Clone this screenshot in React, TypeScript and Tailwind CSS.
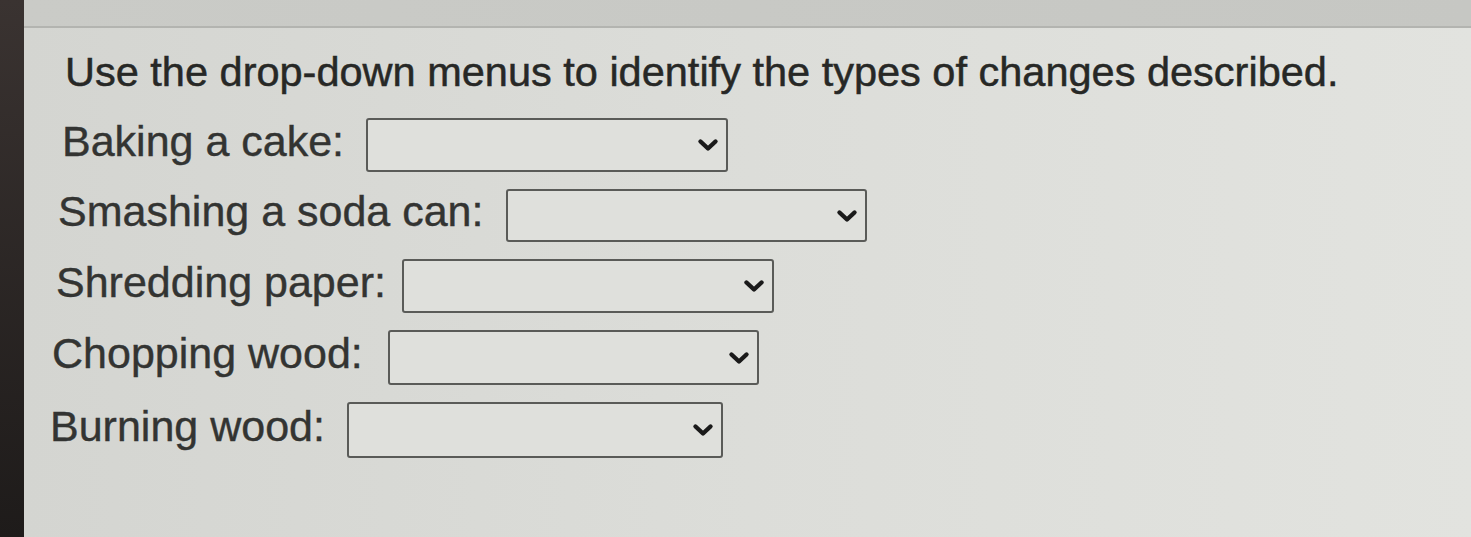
import React from 'react'

type Row = { label: string; indent: string; gap: string; width: string; height: string }

// each question row: label text, left indent, label-to-select gap and the select size
const rows: Row[] = [
  { label: 'Baking a cake:', indent: 'ml-[38px]', gap: 'gap-[22px]', width: 'w-[362px]', height: 'h-[54px]' },
  { label: 'Smashing a soda can:', indent: 'ml-[34px]', gap: 'gap-[22px]', width: 'w-[361px]', height: 'h-[53px]' },
  { label: 'Shredding paper:', indent: 'ml-[32px]', gap: 'gap-[16px]', width: 'w-[372px]', height: 'h-[54px]' },
  { label: 'Chopping wood:', indent: 'ml-[28px]', gap: 'gap-[25px]', width: 'w-[371px]', height: 'h-[55px]' },
  { label: 'Burning wood:', indent: 'ml-[26px]', gap: 'gap-[22px]', width: 'w-[376px]', height: 'h-[56px]' },
]

function Chevron() {
  return (
    <svg width="22" height="14" viewBox="0 0 22 14" fill="none">
      <path d="M3.5 3.5 L11 10.5 L18.5 3.5" stroke="#1a1a1a" strokeWidth="4.4" strokeLinecap="round" strokeLinejoin="round" />
    </svg>
  )
}

function Select({ width, height }: { width: string; height: string }) {
  return (
    <div className={`${width} ${height} shrink-0 flex items-center justify-end pr-[7px] rounded-[3px] border-2 border-[#5a5b58] bg-[#dfe0dc]`}>
      <Chevron />
    </div>
  )
}

export default function App() {
  return (
    <div
      className="w-[1471px] h-[537px] flex overflow-hidden bg-[#d8d9d5] text-[#2f302e]"
      style={{ fontFamily: '"Liberation Sans", Arial, sans-serif' }}
    >
      {/* dark bezel on the left */}
      <div className="w-[24px] shrink-0 bg-gradient-to-b from-[#3a3331] to-[#1e1b1a]" />

      <div className="flex-1 flex flex-col bg-gradient-to-r from-[#d4d5d1] via-[#dcddd9] to-[#e2e3df]">
        {/* header strip */}
        <div className="h-[28px] shrink-0 bg-gradient-to-r from-[#cacbc7] to-[#c6c7c3] border-b-2 border-[#b3b4b0]" />

        <div className="flex flex-col gap-[17px] pt-[23px]">
          <h1 className="ml-[41px] mb-[8px] text-[41.5px] leading-[42px] font-normal text-[#272826] whitespace-nowrap [-webkit-text-stroke:0.5px_#272826]">
            Use the drop-down menus to identify the types of changes described.
          </h1>

          {rows.map((r) => (
            <div key={r.label} className={`${r.indent} ${r.gap} flex items-center`}>
              <span className="pb-[9px] text-[43px] leading-[42px] whitespace-nowrap text-[#333432] [-webkit-text-stroke:0.4px_#333432]">
                {r.label}
              </span>
              <Select width={r.width} height={r.height} />
            </div>
          ))}
        </div>
      </div>
    </div>
  )
}
